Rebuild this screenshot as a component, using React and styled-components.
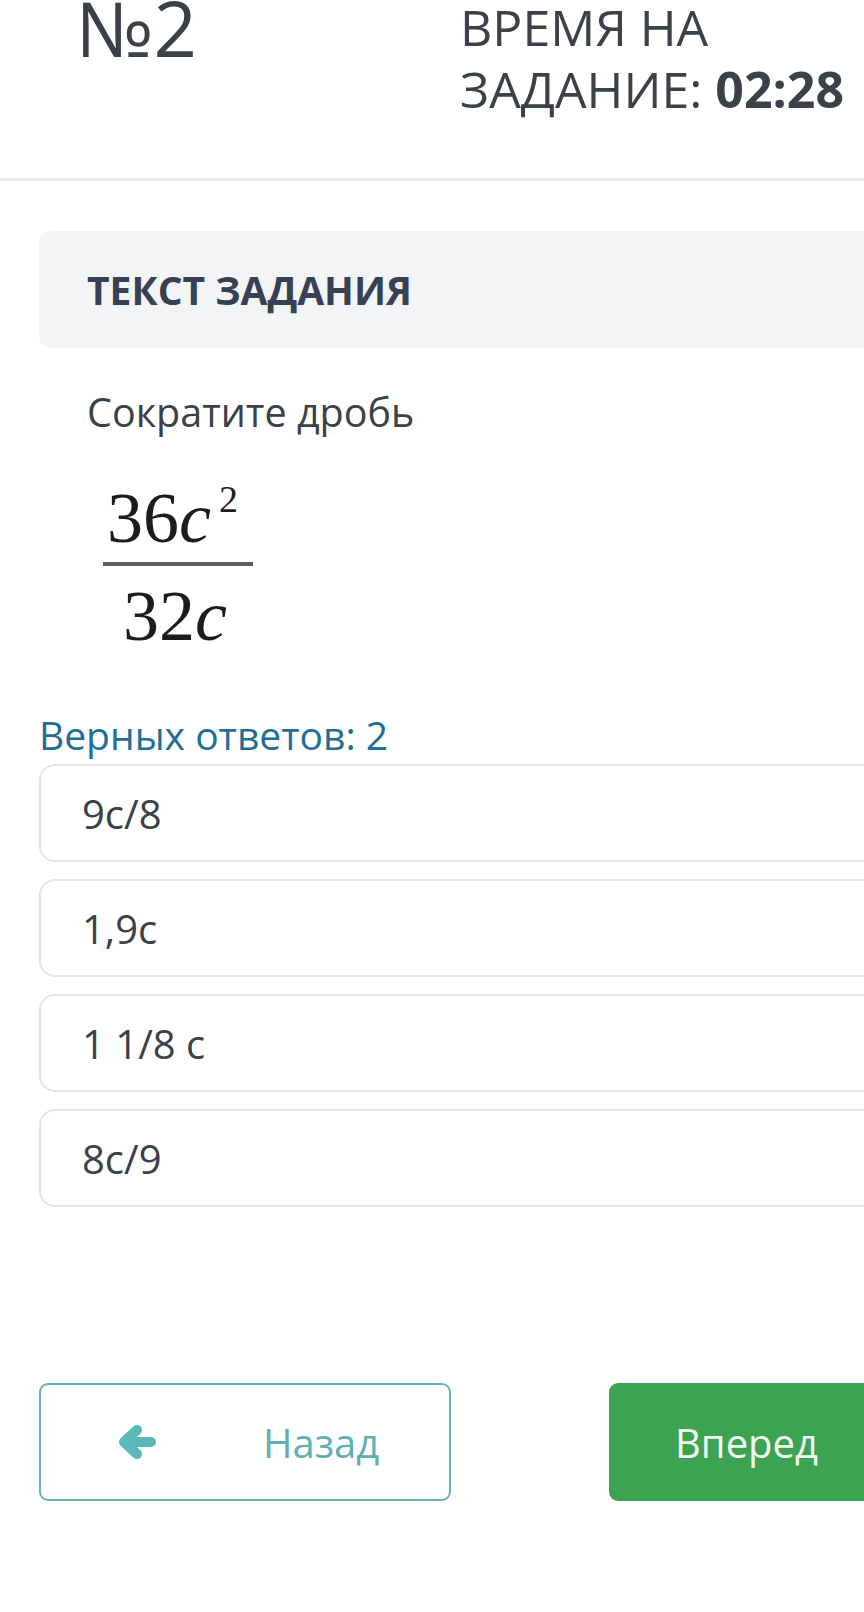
import styled, { createGlobalStyle } from 'styled-components';

const GlobalStyle = createGlobalStyle`
  html, body {
    margin: 0;
    padding: 0;
    background: #ffffff;
    overflow-x: hidden;
  }
  body {
    font-family: 'Open Sans', 'Noto Sans', sans-serif;
    color: #374151;
  }
`;

const Page = styled.div`
  width: 940px;
  min-height: 1612px;
  background: #ffffff;
`;

const Header = styled.header`
  display: flex;
  align-items: flex-start;
  height: 178px;
  padding-left: 76px;
  border-bottom: 3px solid #e5e7eb;
`;

const TaskNumber = styled.div`
  width: 384px;
  font-size: 76px;
  font-weight: 400;
  line-height: 1;
  margin-top: -10px;
  color: #3b4049;
`;

const Timer = styled.div`
  font-size: 50px;
  font-weight: 400;
  line-height: 62px;
  margin-top: -4px;
  color: #3b4049;

  b {
    font-weight: 700;
  }
`;

const Main = styled.main`
  display: flex;
  flex-direction: column;
  padding: 50px 0 0 39px;
`;

const TaskHead = styled.div`
  display: flex;
  align-items: center;
  height: 117px;
  padding-left: 48px;
  border-radius: 12px;
  background: #f3f4f6;
  font-size: 39px;
  font-weight: 700;
  color: #374151;
`;

const TaskBody = styled.div`
  display: flex;
  flex-direction: column;
  padding: 36px 0 0 48px;
`;

const Question = styled.p`
  margin: 0;
  font-size: 39.5px;
  line-height: 56px;
  color: #3b4049;
`;

const Fraction = styled.div`
  display: inline-flex;
  flex-direction: column;
  align-items: flex-start;
  align-self: flex-start;
  margin: 42px 0 0 16px;
  font-family: 'Liberation Serif', 'Times New Roman', serif;
  font-size: 72px;
  line-height: 1;
  color: #1c1c1c;

  i {
    font-style: italic;
  }

  sup {
    font-size: 38px;
    vertical-align: 30px;
    line-height: 0;
    margin-left: 8px;
  }
`;

const Numerator = styled.div`
  padding: 0 0 8px 4px;
`;

const Denominator = styled.div`
  padding: 14px 0 0 20px;
`;

const FractionBar = styled.div`
  width: 150px;
  height: 4px;
  background: #5e5e5e;
`;

const AnswerCount = styled.div`
  margin-top: 58px;
  font-size: 39px;
  line-height: 50px;
  color: #1f6e95;
`;

const Options = styled.div`
  display: flex;
  flex-direction: column;
  gap: 17px;
  margin-top: 4px;
`;

const Option = styled.div`
  display: flex;
  align-items: center;
  height: 94px;
  padding-left: 41px;
  border: 2px solid #e3e5e8;
  border-radius: 16px;
  font-size: 40px;
  color: #3b4049;
`;

const Nav = styled.div`
  display: flex;
  gap: 158px;
  margin-top: 176px;
`;

const BackButton = styled.button`
  display: flex;
  align-items: center;
  width: 412px;
  height: 118px;
  padding: 0 0 0 76px;
  gap: 106px;
  border: 2px solid #6cb2b4;
  border-radius: 9px;
  background: #ffffff;
  font-family: inherit;
  font-size: 40px;
  color: #5fb0b2;
`;

const ArrowIcon = styled.svg`
  width: 40px;
  height: 36px;
  flex-shrink: 0;
`;

const ForwardButton = styled.button`
  display: flex;
  align-items: center;
  width: 320px;
  height: 118px;
  padding: 0 0 0 66px;
  border: none;
  border-radius: 9px;
  background: #3ba351;
  font-family: inherit;
  font-size: 40px;
  color: #f2fbf2;
`;

const options = ['9c/8', '1,9c', '1 1/8 c', '8c/9'];

export default function App() {
  return (
    <Page>
      <GlobalStyle />
      <Header>
        <TaskNumber>№2</TaskNumber>
        <Timer>
          ВРЕМЯ НА
          <br />
          ЗАДАНИЕ: <b>02:28</b>
        </Timer>
      </Header>
      <Main>
        <TaskHead>ТЕКСТ ЗАДАНИЯ</TaskHead>
        <TaskBody>
          <Question>Сократите дробь</Question>
          <Fraction>
            <Numerator>
              36<i>c</i>
              <sup>2</sup>
            </Numerator>
            <FractionBar />
            <Denominator>
              32<i>c</i>
            </Denominator>
          </Fraction>
        </TaskBody>
        <AnswerCount>Верных ответов: 2</AnswerCount>
        <Options>
          {options.map((text) => (
            <Option key={text}>{text}</Option>
          ))}
        </Options>
        <Nav>
          <BackButton>
            <ArrowIcon viewBox="0 0 40 36">
              <path
                d="M34 18 H9 M20 6 L7 18 L20 30"
                fill="none"
                stroke="#59b8b8"
                strokeWidth="10"
                strokeLinecap="round"
                strokeLinejoin="round"
              />
            </ArrowIcon>
            Назад
          </BackButton>
          <ForwardButton>Вперед</ForwardButton>
        </Nav>
      </Main>
    </Page>
  );
}
